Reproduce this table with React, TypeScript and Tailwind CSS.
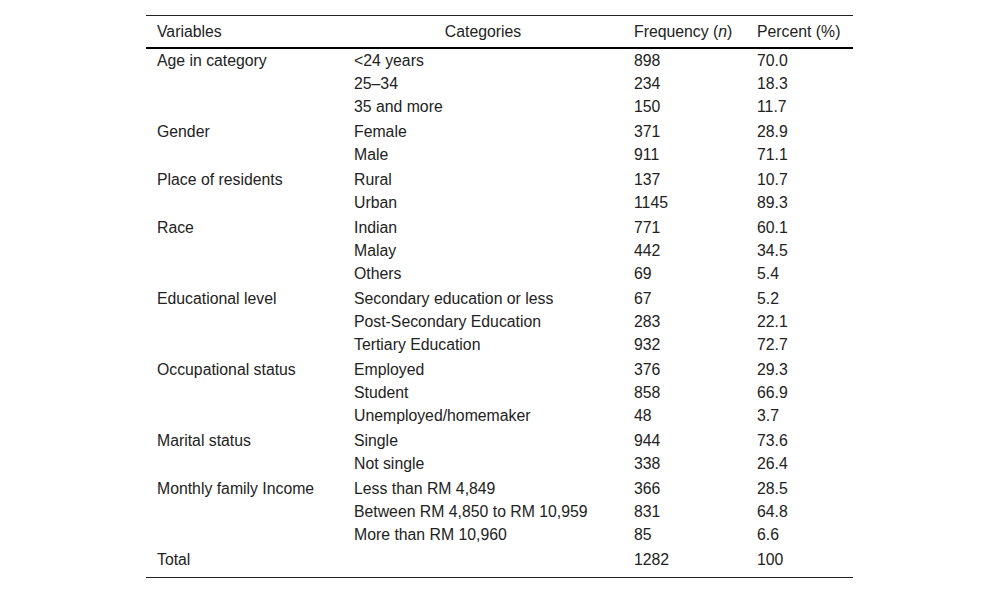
type Group = {
  variable: string;
  rows: [string, string, string][];
};

const groups: Group[] = [
  {
    variable: "Age in category",
    rows: [
      ["<24 years", "898", "70.0"],
      ["25–34", "234", "18.3"],
      ["35 and more", "150", "11.7"],
    ],
  },
  {
    variable: "Gender",
    rows: [
      ["Female", "371", "28.9"],
      ["Male", "911", "71.1"],
    ],
  },
  {
    variable: "Place of residents",
    rows: [
      ["Rural", "137", "10.7"],
      ["Urban", "1145", "89.3"],
    ],
  },
  {
    variable: "Race",
    rows: [
      ["Indian", "771", "60.1"],
      ["Malay", "442", "34.5"],
      ["Others", "69", "5.4"],
    ],
  },
  {
    variable: "Educational level",
    rows: [
      ["Secondary education or less", "67", "5.2"],
      ["Post-Secondary Education", "283", "22.1"],
      ["Tertiary Education", "932", "72.7"],
    ],
  },
  {
    variable: "Occupational status",
    rows: [
      ["Employed", "376", "29.3"],
      ["Student", "858", "66.9"],
      ["Unemployed/homemaker", "48", "3.7"],
    ],
  },
  {
    variable: "Marital status",
    rows: [
      ["Single", "944", "73.6"],
      ["Not single", "338", "26.4"],
    ],
  },
  {
    variable: "Monthly family Income",
    rows: [
      ["Less than RM 4,849", "366", "28.5"],
      ["Between RM 4,850 to RM 10,959", "831", "64.8"],
      ["More than RM 10,960", "85", "6.6"],
    ],
  },
];

const cell = "px-[11px] text-left font-normal align-middle whitespace-nowrap";

const App = () => {
  return (
    <div className="min-h-[592px] w-full bg-white pt-[15px] font-['Liberation_Sans',Arial,sans-serif] text-[15.8px] leading-[23px] text-[#222]">
      <table className="ml-[146px] w-[707px] table-fixed border-collapse">
        <colgroup>
          <col className="w-[197px]" />
          <col className="w-[280px]" />
          <col className="w-[123px]" />
          <col className="w-[107px]" />
        </colgroup>
        <thead>
          <tr className="h-[32px] border-t border-b-2 border-t-[#222] border-b-black">
            <th className={cell}>Variables</th>
            <th className={`${cell} !text-center`}>Categories</th>
            <th className={cell}>
              Frequency (<i>n</i>)
            </th>
            <th className={cell}>Percent (%)</th>
          </tr>
        </thead>
        {groups.map((g) => (
          <tbody key={g.variable}>
            {g.rows.map((r, i) => {
              const last = i === g.rows.length - 1;
              const pad = last ? "pb-[2px]" : "";
              return (
                <tr key={r[0]} className={last ? "h-[25px]" : "h-[23px]"}>
                  <td className={`${cell} ${pad}`}>{i === 0 ? g.variable : ""}</td>
                  <td className={`${cell} ${pad}`}>{r[0]}</td>
                  <td className={`${cell} ${pad}`}>{r[1]}</td>
                  <td className={`${cell} ${pad}`}>{r[2]}</td>
                </tr>
              );
            })}
          </tbody>
        ))}
        <tbody>
          <tr className="h-[30px] border-b border-b-[#222]">
            <td className={`${cell} pb-[6px]`}>Total</td>
            <td className={`${cell} pb-[6px]`}></td>
            <td className={`${cell} pb-[6px]`}>1282</td>
            <td className={`${cell} pb-[6px]`}>100</td>
          </tr>
        </tbody>
      </table>
    </div>
  );
};

export default App;
